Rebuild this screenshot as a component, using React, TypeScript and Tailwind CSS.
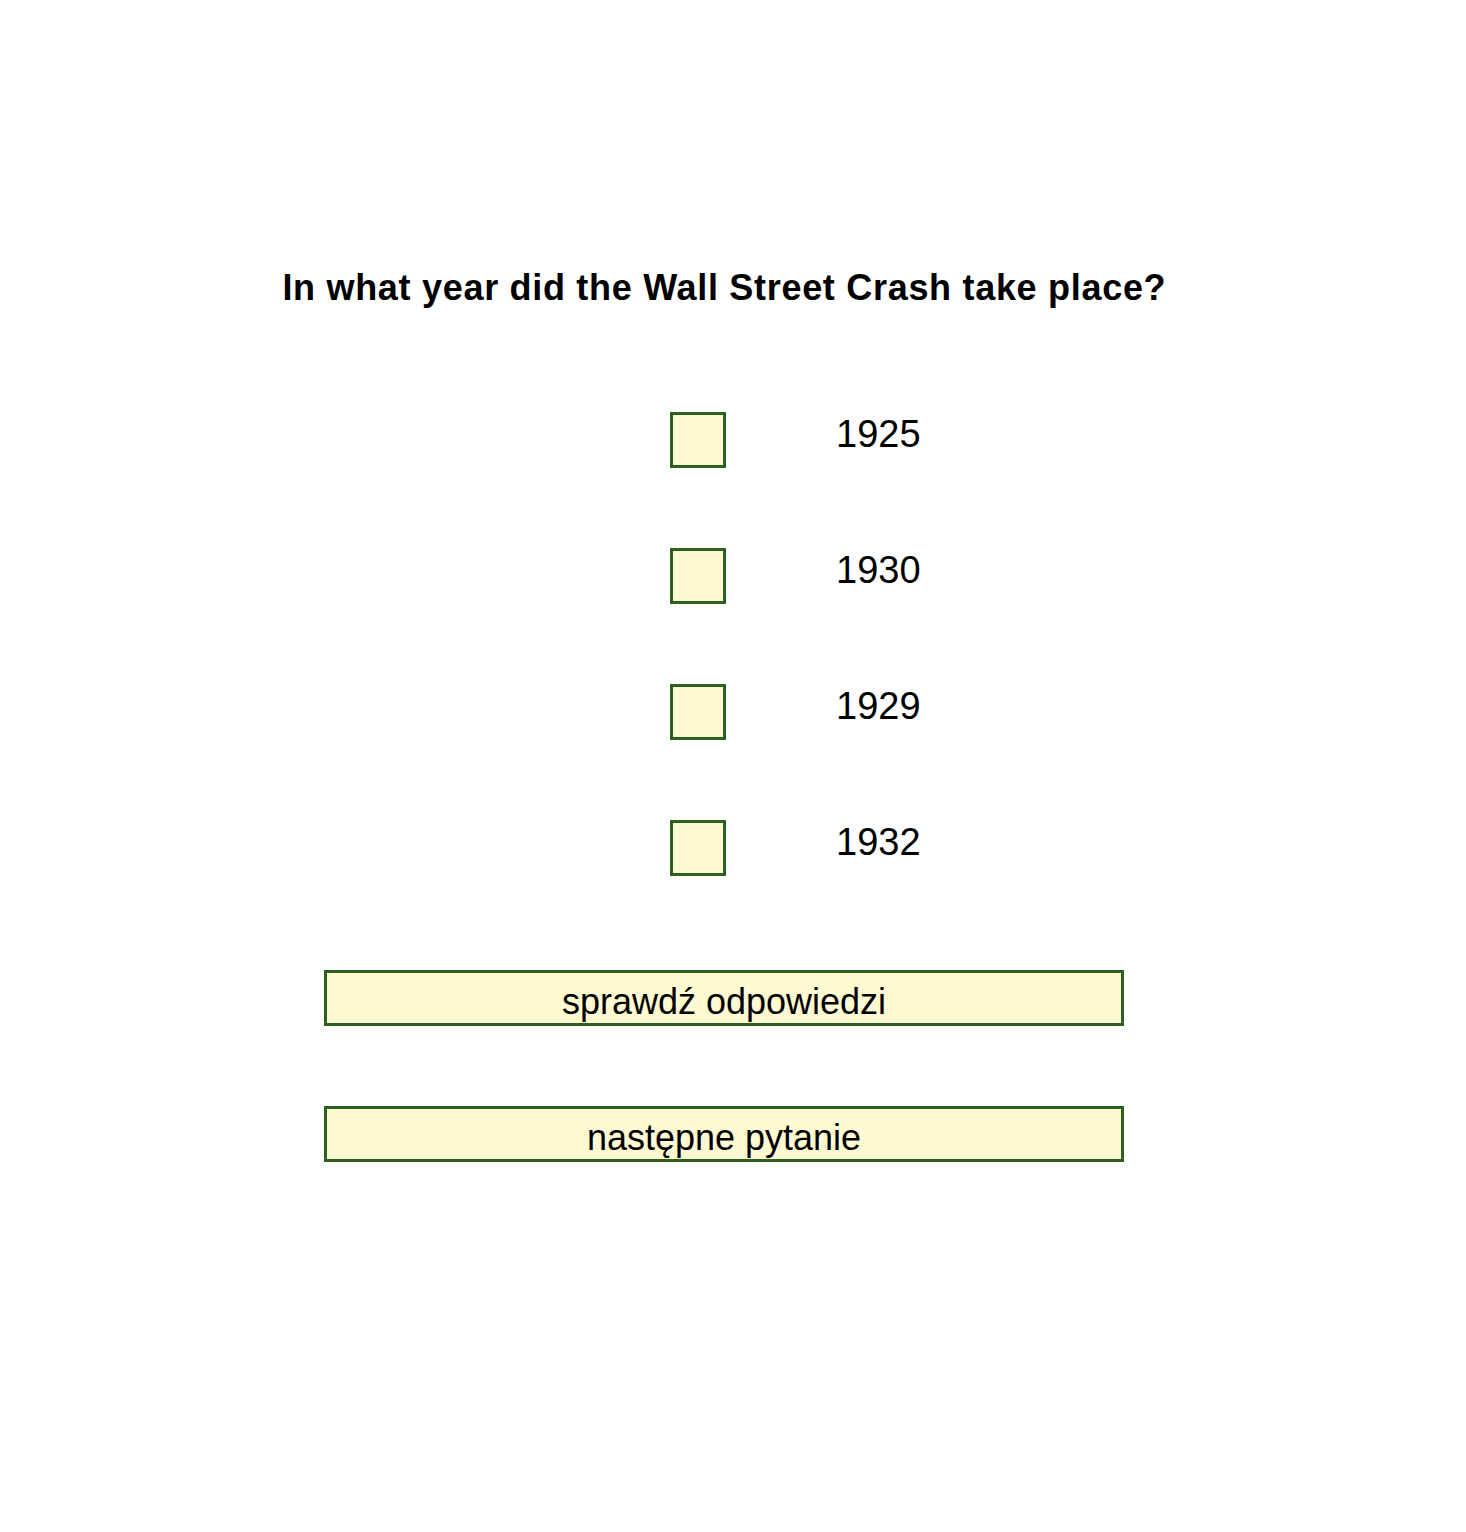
import React from "react";

const options = ["1925", "1930", "1929", "1932"];

export default function App() {
  return (
    <div className="min-h-[1532px] w-[1466px] bg-white text-black" style={{ fontFamily: '"Liberation Sans", Arial, sans-serif' }}>
      <div className="w-[1448px] flex flex-col items-center">
        <h1 className="mt-[266px] text-[36px] font-bold leading-[44px] tracking-[0.7px] pl-[0.7px]">In what year did the Wall Street Crash take place?</h1>
        <div className="mt-[102px] w-[800px] flex flex-col gap-[80px]">
          {options.map((o) => (
            <div key={o} className="flex items-start h-[56px]">
              <div className="ml-[346px] w-[56px] h-[56px] border-[3px] border-[#2e5f1c] bg-[#fffad2]" />
              <div className="ml-[110px] text-[38px] leading-[44px]">{o}</div>
            </div>
          ))}
        </div>
        <div className="mt-[94px] w-[800px] flex flex-col gap-[80px]">
          {["sprawdź odpowiedzi", "następne pytanie"].map((b) => (
            <div key={b} className="h-[56px] border-[3px] border-[#2e5f1c] bg-[#fffad2] flex items-center justify-center text-[36px] leading-[40px] pt-[8px]">
              {b}
            </div>
          ))}
        </div>
      </div>
    </div>
  );
}
